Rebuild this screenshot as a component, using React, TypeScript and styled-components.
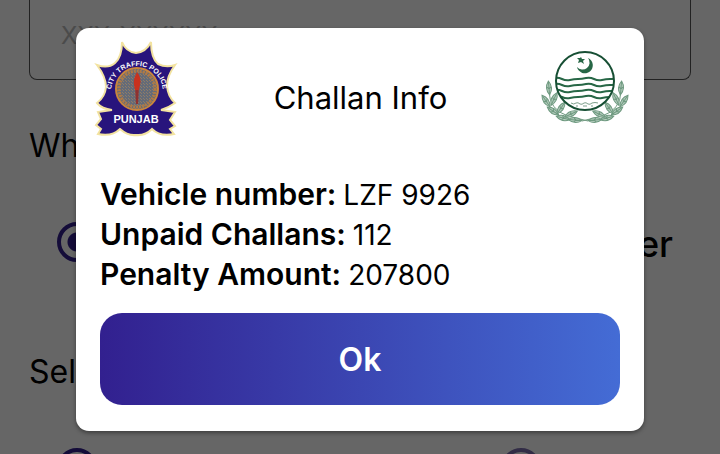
import React from "react";
import styled, { createGlobalStyle } from "styled-components";

const GlobalStyle = createGlobalStyle`
  * { box-sizing: border-box; }
  body { margin: 0; background: #fff; color: #000; font-family: Inter, "Open Sans", sans-serif; }
`;

const Page = styled.div`
  position: relative;
  height: 100vh;
  overflow: hidden;
`;

const Form = styled.form`
  display: flex;
  flex-direction: column;
  padding: 0 29px;
`;

const NumberInput = styled.input`
  width: 100%;
  height: 80px;
  padding: 0 31px 8px;
  border: 1px solid #555;
  border-top: 0;
  border-radius: 0 0 8px 8px;
  background: #fff;
  font: 400 24px Inter, sans-serif;
  &::placeholder { color: #bbb; opacity: 1; }
`;

const Group = styled.fieldset`
  display: flex;
  flex-direction: column;
  min-width: 0;
  margin: 0;
  padding: 0;
  border: 0;
`;

const Legend = styled.legend`
  padding: 44px 0 0;
  font-size: 32px;
  line-height: 44px;
`;

const Options = styled.div<{ $spread?: boolean }>`
  display: grid;
  grid-template-columns: ${(p) => (p.$spread ? "1fr auto" : "72% 1fr")};
  align-items: start;
  height: 138px;
  padding: 54px 18px 0 28px;
`;

const Option = styled.label`
  display: flex;
  align-items: center;
  gap: 16px;
  font-size: 36px;
  line-height: 44px;
  font-weight: 500;
`;

const Radio = styled.input<{ $muted?: boolean }>`
  appearance: none;
  flex: none;
  width: 40px;
  height: 40px;
  margin: 0;
  border: 4px solid ${(p) => (p.$muted ? "#7d6fae" : "#33208f")};
  border-radius: 50%;
  &:checked { background: radial-gradient(circle, #33208f 9px, transparent 10px); }
`;

const Overlay = styled.div`
  position: absolute;
  inset: 0;
  display: flex;
  align-items: flex-start;
  padding: 28px 76px;
  background: rgba(0, 0, 0, 0.6);
`;

const Dialog = styled.section`
  flex: 1;
  padding: 12px 24px 26px;
  border-radius: 13px;
  background: #fff;
  box-shadow: 0 2px 4px rgba(0, 0, 0, 0.4);
`;

const Header = styled.header`
  display: grid;
  grid-template-columns: 88px 1fr 88px;
  align-items: start;
  margin: 0 -9px 0 -8px;
`;

const Title = styled.h1`
  margin: 0;
  padding-top: 40px;
  font-size: 31px;
  line-height: 36px;
  font-weight: 400;
  text-align: center;
`;

const Crest = styled.svg`
  display: block;
  width: 88px;
  height: 98px;
`;

const Details = styled.dl`
  margin: 0;
  padding-top: 36px;
  line-height: 40px;
`;

const Detail = styled.div`
  display: flex;
  align-items: baseline;
  gap: 7px;
  height: 40px;
`;

const Term = styled.dt`
  font-size: 30px;
  font-weight: 600;
`;

const Value = styled.dd`
  margin: 0;
  font-size: 28px;
`;

const OkButton = styled.button`
  display: block;
  width: 100%;
  height: 92px;
  margin-top: 19px;
  border: 0;
  border-radius: 22px;
  background: linear-gradient(90deg, #32208f, #446cd5);
  color: #fff;
  font: 600 32px Inter, sans-serif;
`;

function PoliceBadge() {
  return (
    <Crest viewBox="92 40 88 98" role="img" aria-label="City Traffic Police Punjab">
      <defs>
        <path id="badge-arc" d="M111 92 A26 26 0 1 1 163 92" />
        <pattern id="badge-grain" width="3" height="3" patternUnits="userSpaceOnUse">
          <rect width="3" height="3" fill="#646b78" />
          <path d="M0 0h1v1H0zM2 2h1v1H2z" fill="#8f7c66" />
        </pattern>
      </defs>
      <path
        d="M122 42 Q126 52 136 53 Q146 52 151 42 Q151 58 158 64 Q166 68 175 65 Q167 76 167 86 Q168 97 175 103 Q168 108 161 110 L175 112 L170 120 L175 126 L170 129 L174 134 Q160 137 152 129 Q145 136 136 135 Q128 136 120 129 Q112 137 98 134 L101 129 L96 125 L101 119 L98 112 L112 110 Q102 109 97 103 Q105 97 106 87 Q106 77 97 65 Q108 69 115 63 Q122 57 122 42Z"
        fill="#28147c" stroke="#f3e3a0" strokeWidth="2"
      />
      <circle cx="137" cy="89" r="21" fill="url(#badge-grain)" stroke="#c9853c" strokeWidth="2" />
      <circle cx="137" cy="89" r="18" fill="none" stroke="#b07a45" strokeWidth="3" strokeDasharray="2 1" />
      <path d="M135 87h4l-1 17h-2z" fill="#8f3130" />
      <path d="M137 72q5 6 3 13l-1 5h-4l-1-5q-1-6 3-13" fill="#c8321f" />
      <text fill="#fff" fontFamily="Liberation Sans, sans-serif" fontWeight="700" fontSize="7">
        <textPath href="#badge-arc" startOffset="50%" textAnchor="middle">CITY TRAFFIC POLICE</textPath>
      </text>
      <text x="136" y="123" fill="#fff" textAnchor="middle" fontFamily="Liberation Sans, sans-serif" fontWeight="700" fontSize="11">PUNJAB</text>
    </Crest>
  );
}

const sprigs = [[549, 88, -5], [546, 101, -35], [553, 111, -55], [563, 118, -75], [554, 99, 25], [561, 108, 35], [571, 114, 65], [575, 120, -85]];

function Laurel() {
  return (
    <g fill="#b4ccbd" stroke="#6f9a80" strokeWidth="1">
      <path d="M549 90 Q549 110 568 116 L588 121" fill="none" />
      {sprigs.map(([x, y, angle]) => (
        <g key={`${x}-${y}`} transform={`translate(${x} ${y}) rotate(${angle})`}>
          <path d="M0-7 Q-5 0 0 7 Q5 0 0-7Z" />
          <path d="M0-6V7M-2-1L0 1L2-1" fill="none" />
        </g>
      ))}
    </g>
  );
}

const waveRows = [78, 84, 90, 96];

function ProvinceCrest() {
  return (
    <Crest viewBox="541 40 88 98" role="img" aria-label="Government of Punjab">
      <defs>
        <clipPath id="crest-disc"><circle cx="585" cy="81" r="29" /></clipPath>
      </defs>
      <Laurel />
      <g transform="translate(1170 0) scale(-1 1)"><Laurel /></g>
      <circle cx="585" cy="81" r="29" fill="#fff" />
      <g clipPath="url(#crest-disc)" fill="none" stroke="#276746" strokeWidth="2">
        {waveRows.map((y) => (
          <path key={y} d={`M554 ${y}q4-1 8 1t8 1 8-1 8-1 8 1 8 1 8-1 8-1`} />
        ))}
      </g>
      <circle cx="585" cy="81" r="29" fill="none" stroke="#174f34" strokeWidth="2" />
      <path d="M588 58A8 8 0 1 1 577 67A7 7 0 1 0 588 58Z" fill="#276746" />
      <path d="m581 57 1 2 3 0-2 2 1 3-3-2-3 1 1-3-2-2h3z" fill="#276746" />
      <path d="M571 103q3 2 5 0q2-1 4 1q2 1 4-1q2-1 4 1q2 1 4-1q3-1 6 0M576 106h2m5 0h4m4 0h2" fill="none" stroke="#7d9f8b" />
    </Crest>
  );
}

const details = [
  ["Vehicle number:", "LZF 9926"],
  ["Unpaid Challans:", "112"],
  ["Penalty Amount:", "207800"],
];

export default function App() {
  return (
    <Page>
      <GlobalStyle />
      <Form>
        <NumberInput aria-label="Number" placeholder="XXX-XXXXXX" />
        <Group>
          <Legend>What</Legend>
          <Options $spread>
            <Option><Radio type="radio" name="kind" defaultChecked /></Option>
            <Option><Radio type="radio" name="kind" />er</Option>
          </Options>
        </Group>
        <Group>
          <Legend>Select</Legend>
          <Options>
            <Option><Radio type="radio" name="choice" aria-label="First choice" /></Option>
            <Option><Radio $muted type="radio" name="choice" aria-label="Second choice" /></Option>
          </Options>
        </Group>
      </Form>
      <Overlay>
        <Dialog role="dialog" aria-modal="true" aria-labelledby="dialog-title">
          <Header>
            <PoliceBadge />
            <Title id="dialog-title">Challan Info</Title>
            <ProvinceCrest />
          </Header>
          <Details>
            {details.map(([term, value]) => (
              <Detail key={term}><Term>{term}</Term><Value>{value}</Value></Detail>
            ))}
          </Details>
          <OkButton type="button">Ok</OkButton>
        </Dialog>
      </Overlay>
    </Page>
  );
}
